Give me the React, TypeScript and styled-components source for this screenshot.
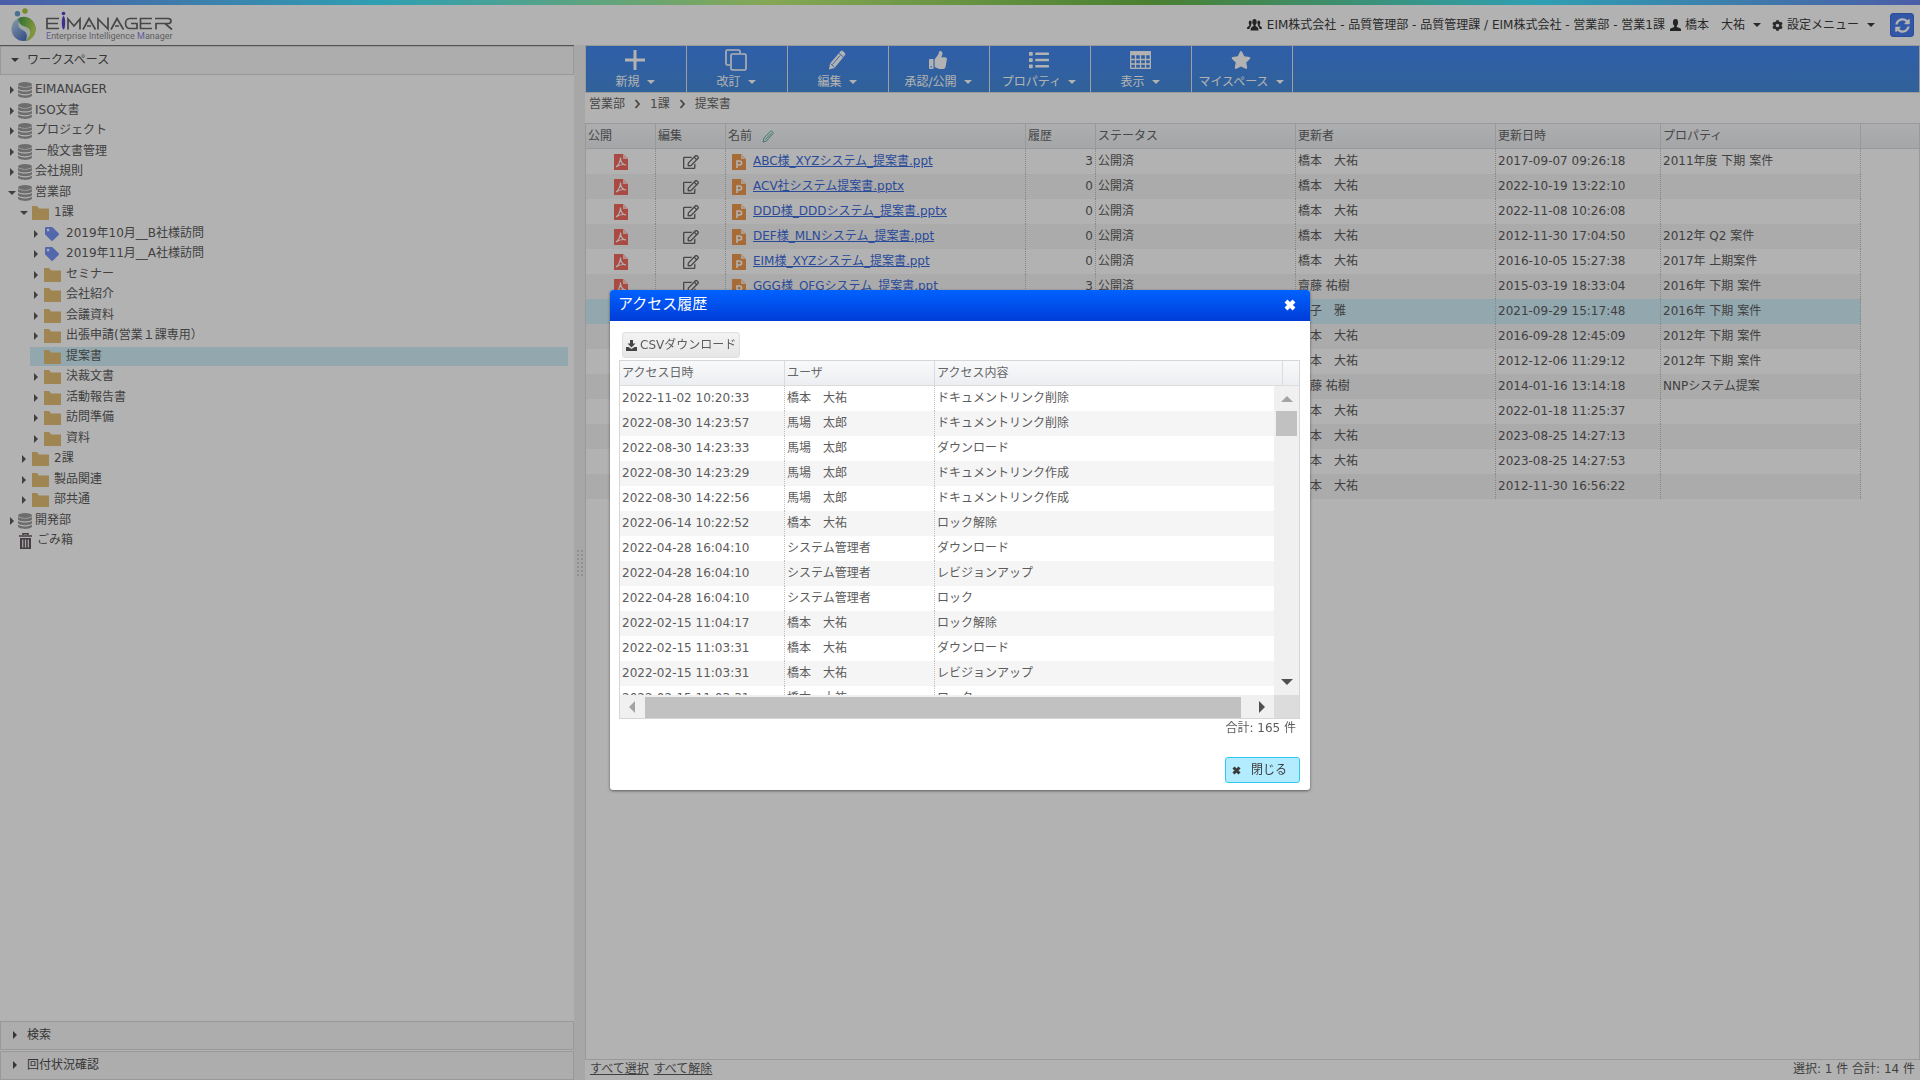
import React from "react";
import styled, { createGlobalStyle, css } from "styled-components";
import { FaCog, FaList, FaStar, FaTag, FaThumbsUp, FaSyncAlt, FaRegEdit } from "react-icons/fa";

const Global = createGlobalStyle`
  *, *::before, *::after { box-sizing: border-box; }
  body { margin: 0; background: #fff; }
  body, button, table {
    font-family: "DejaVu Sans", "Noto Sans CJK JP", sans-serif;
    font-size: 12px;
    line-height: 16px;
    color: #5c5c5c;
  }
  button { margin: 0; padding: 0; border: 0; background: none; cursor: pointer; }
  ul { list-style: none; margin: 0; padding: 0; }
  svg { display: block; flex: none; }
`;

/* ---------- shell ---------- */

const Page = styled.div`
  display: flex;
  flex-direction: column;
  height: 100vh;
  overflow: hidden;
`;

const Stripe = styled.div`
  flex: none;
  height: 5px;
  background: linear-gradient(90deg, #6c86f0 0%, #44e4ff 20%, #c0f07a 40%, #6ab745 60%, #44e4ff 80%, #6c86f0 100%);
`;

const Header = styled.header`
  flex: none;
  display: flex;
  align-items: center;
  height: 40px;
  padding: 0 6px 0 11px;
`;

const Brand = styled.div`
  display: flex;
  align-items: center;
  margin-right: auto;
`;

const UserBar = styled.div`
  display: flex;
  align-items: center;
  gap: 5px;
  color: #3c3c3c;
`;

const MenuButton = styled.button`
  display: flex;
  align-items: center;
  gap: 4px;
  margin-right: 6px;
  color: #3c3c3c;
`;

const Caret = styled.span<{ $open?: boolean; $size?: number }>`
  flex: none;
  width: 0;
  height: 0;
  border: ${(p) => p.$size ?? 4}px solid transparent;
  ${(p) =>
    p.$open
      ? css`
          border-bottom-width: 0;
          border-top-color: currentColor;
        `
      : css`
          border-right-width: 0;
          border-left-color: currentColor;
        `}
`;

const MenuCaret = styled(Caret)`
  margin-left: 4px;
`;

const RefreshButton = styled.button`
  display: grid;
  place-items: center;
  width: 24px;
  height: 24px;
  margin-left: 4px;
  border: 1px solid #3c6fe0;
  border-radius: 3px;
  background: #4a7df0;
  color: #fff;
`;

const Main = styled.div`
  flex: 1;
  display: flex;
  min-height: 0;
`;

/* ---------- left pane ---------- */

const Sidebar = styled.aside`
  flex: none;
  display: flex;
  flex-direction: column;
  gap: 1px;
  width: 574px;
  border-top: 1px solid #787878;
`;

const PaneTitle = styled.button`
  flex: none;
  display: flex;
  align-items: center;
  gap: 8px;
  height: 29px;
  padding: 0 10px 2px;
  border: 1px solid #dcdcdc;
  background: #f8f8f8;
  color: #4c4c4c;
`;

const CaretBox = styled.span`
  flex: none;
  display: flex;
  align-items: center;
  justify-content: center;
  width: 8px;
  height: 16px;
`;

const Tree = styled.ul`
  flex: 1;
  min-height: 0;
  padding: 4px 6px 0;
`;

const TreeItem = styled.li<{ $level: number }>`
  height: 20px;
  padding-left: ${(p) => p.$level * 12}px;
  &:nth-child(odd) {
    height: 21px;
  }
`;

const TreeButton = styled.button<{ $selected?: boolean; $gap: number }>`
  display: flex;
  align-items: center;
  gap: ${(p) => p.$gap}px;
  width: 100%;
  height: 19px;
  padding-bottom: 2px;
  text-align: left;
  background: ${(p) => (p.$selected ? "#d2f0fa" : "none")};
`;

const TreeIcon = styled.span<{ $gap: number }>`
  display: flex;
  align-items: center;
  gap: ${(p) => p.$gap}px;
  padding-top: 3px;
`;

const TreeCaretBox = styled(CaretBox)`
  width: 12px;
`;

const Splitter = styled.div`
  flex: none;
  display: grid;
  place-content: center;
  grid-template-columns: repeat(2, 2px);
  grid-auto-rows: 2px;
  gap: 2px;
  width: 11px;
  background: #f0f0f0;
`;

const Grip = styled.i`
  background: #d0d0d0;
`;

/* ---------- right pane ---------- */

const Content = styled.main`
  flex: 1;
  display: flex;
  flex-direction: column;
  min-width: 0;
`;

const Toolbar = styled.nav`
  flex: none;
  display: flex;
  height: 48px;
  border: 1px solid #dcdcdc;
  background: linear-gradient(#4488f2, #468cdc);
`;

const Tool = styled.button`
  display: flex;
  flex-direction: column;
  align-items: center;
  justify-content: space-between;
  width: 101px;
  padding: 2px 2px 2px 0;
  border-right: 1px solid #e4e4e4;
  color: #fff;
`;

const ToolIcon = styled.span`
  display: grid;
  place-items: center;
  height: 24px;
`;

const ToolLabel = styled.span`
  display: flex;
  align-items: center;
  gap: 7px;
`;

const Crumbs = styled.nav`
  flex: none;
  display: flex;
  align-items: center;
  gap: 9px;
  height: 30px;
  padding: 0 4px 8px;
`;

const CrumbLink = styled.a`
  color: #666;
  text-decoration: none;
`;

const GridFrame = styled.section`
  flex: 1;
  min-height: 0;
  border: 1px solid #dcdcdc;
`;

const DataTable = styled.table`
  width: 100%;
  table-layout: fixed;
  border-collapse: separate;
  border-spacing: 0;
`;

const Th = styled.th`
  height: 25px;
  padding: 0 2px;
  border-right: 1px solid #dcdcdc;
  border-bottom: 1px solid #dcdcdc;
  background: linear-gradient(#f8f9fb, #eceef1);
  font-weight: normal;
  text-align: left;
  white-space: nowrap;
  color: #666;
  &:last-child {
    border-right: 0;
  }
`;

const ThInner = styled.span`
  display: flex;
  align-items: center;
  gap: 10px;
`;

const Td = styled.td<{ $align?: "right" | "center" }>`
  height: 25px;
  padding: 0 2px 2px;
  border-right: 1px dotted #c0c0c0;
  text-align: ${(p) => p.$align ?? "left"};
  white-space: nowrap;
  overflow: hidden;
`;

const Filler = styled.td`
  background: #fff;
`;

const Row = styled.tr<{ $selected?: boolean }>`
  background: #fff;
  &:nth-child(even) {
    background: #f5f5f5;
  }
  ${(p) => p.$selected && "&& { background: #d2f0fa; }"}
`;

const IconCell = styled.span`
  display: flex;
  justify-content: center;
  padding-top: 2px;
`;

const NameCell = styled.span`
  display: flex;
  align-items: center;
  gap: 7px;
  padding-left: 4px;
`;

const FileIcon = styled.span`
  padding-top: 2px;
`;

const FileLink = styled.a`
  color: #3c6cdc;
  text-decoration: underline;
`;

const GridFoot = styled.footer`
  flex: none;
  display: flex;
  align-items: center;
  gap: 5px;
  height: 20px;
  padding: 0 5px 2px;
`;

const FootButton = styled.button`
  text-decoration: underline;
`;

const FootTotal = styled.span`
  margin-left: auto;
`;

/* ---------- dialog ---------- */

const Overlay = styled.div`
  position: fixed;
  inset: 0;
  display: grid;
  place-items: center;
  background: rgba(0, 0, 0, 0.3);
`;

const Dialog = styled.div`
  display: flex;
  flex-direction: column;
  width: 700px;
  height: 500px;
  border-radius: 3px;
  background: #fff;
  box-shadow: 0 1px 3px rgba(0, 0, 0, 0.5);
  overflow: hidden;
`;

const DialogHead = styled.header`
  flex: none;
  display: flex;
  align-items: center;
  justify-content: space-between;
  height: 31px;
  padding: 0 14px 4px 8px;
  background: linear-gradient(#0062ff, #003cd8);
  color: #fff;
`;

const DialogTitle = styled.h2`
  margin: 0;
  font-size: 15px;
  line-height: 20px;
  font-weight: normal;
`;

const IconButton = styled.button`
  padding-top: 2px;
  color: #fff;
`;

const DialogBody = styled.div`
  flex: 1;
  display: flex;
  flex-direction: column;
  padding: 11px 10px 7px 9px;
`;

const CsvButton = styled.button`
  display: flex;
  align-items: center;
  align-self: flex-start;
  gap: 3px;
  height: 26px;
  margin: 0 0 2px 3px;
  padding: 0 3px;
  border: 1px solid #e0e0e0;
  border-radius: 3px;
  background: linear-gradient(#f3f3f3, #e6e6e6);
`;

const ListFrame = styled.div`
  position: relative;
  flex: none;
  display: flex;
  flex-direction: column;
  height: 359px;
  border: 1px solid #d6d6d6;
`;

const ListClip = styled.div`
  flex: 1;
  overflow: hidden;
`;

const VScroll = styled.div`
  position: absolute;
  top: 25px;
  right: 0;
  bottom: 23px;
  display: flex;
  flex-direction: column;
  align-items: center;
  width: 25px;
  padding: 10px 0;
  background: #f0f0f0;
`;

const VThumb = styled.div`
  width: 21px;
  height: 25px;
  margin: 9px 0 auto;
  background: #c1c1c1;
`;

const HScroll = styled.div`
  flex: none;
  display: flex;
  align-items: center;
  height: 23px;
  background: #f0f0f0;
`;

const HThumb = styled.div`
  flex: 1;
  height: 21px;
  margin: 2px 18px 0 10px;
  background: #c1c1c1;
`;

const Corner = styled.div`
  width: 25px;
  height: 23px;
  margin-left: 9px;
  background: #dcdcdc;
`;

const ArrowTip = styled.span<{ $dir: "up" | "down" | "left" | "right"; $dim?: boolean }>`
  flex: none;
  width: 0;
  height: 0;
  border: 6px solid transparent;
  ${({ $dir, $dim }) => {
    const ink = $dim ? "#a3a3a3" : "#505050";
    const base = { up: "bottom", down: "top", left: "right", right: "left" }[$dir];
    const tip = { up: "top", down: "bottom", left: "left", right: "right" }[$dir];
    return `border-${base}-color: ${ink}; border-${tip}-width: 0; ${$dir === "left" ? "margin-left: 9px;" : ""}`;
  }}
`;

const Total = styled.div`
  padding: 1px 4px 0;
  text-align: right;
`;

const DialogFoot = styled.div`
  display: flex;
  justify-content: flex-end;
  margin-top: auto;
`;

const CloseButton = styled.button`
  display: flex;
  align-items: center;
  gap: 10px;
  height: 26px;
  padding: 0 12px 0 6px;
  border: 1px solid #2fc8f6;
  border-radius: 3px;
  background: #b4ecff;
  color: #3c3c3c;
`;

/* ---------- drawings ---------- */

const Logo = () => (
  <svg width="162" height="34" viewBox="0 0 162 34" role="img" aria-label="EIMANAGER">
    <defs>
      <linearGradient id="lgBlue" x1="0" y1="0.2" x2="0.8" y2="1">
        <stop offset="0" stopColor="#b8d8f0" />
        <stop offset="1" stopColor="#3a5cb8" />
      </linearGradient>
      <linearGradient id="lgGreen" x1="0" y1="0" x2="1" y2="0.4">
        <stop offset="0" stopColor="#3f9a55" />
        <stop offset="1" stopColor="#bfdc4a" />
      </linearGradient>
    </defs>
    <circle cx="14" cy="3" r="2.700" fill="#a9c83c" />
    <circle cx="6.500" cy="5.800" r="2.700" fill="#6d9fc9" />
    <ellipse cx="12.500" cy="21" rx="12" ry="12" fill="url(#lgBlue)" />
    <path d="M8 10C16 6 24.500 12.500 24.500 21c0 6.500-5 12-10.500 12 5-3 6-8 1.500-11C11 19 7 18 7 14c0-2 .500-3 1-4z" fill="url(#lgGreen)" />
    <path d="M8.500 11c-1.500 5 2 6.500 6.500 8 6 2 5.500 9 0 13.500 2-6 .500-8.500-3.500-10.500-4-2-5.500-6-3-11z" fill="#e4efe8" />
    <g fill="none" stroke="#666" strokeWidth="1.700">
      <path d="M48 10.500H36v10H48M36 15.500H47" />
      <path d="M57 21.500V11l6 7 6-7v10.500" />
      <path d="M72 21.500 78 10.500l6.500 11M80 18h-4" />
      <path d="M87 21.500V11l10 10V9.500" />
      <path d="M100 21.500 106 10.500l6.500 11M108 18h-4" />
      <path d="M126 10.500h-7c-6 0-6 10 0 10h7v-5h-6" />
      <path d="M141 10.500h-11.500v10H141M129.500 15.500H140" />
      <path d="M145 21.500v-6h12c4 0 4-5 0-5h-13M154 15.500l7 6" />
    </g>
    <circle cx="52.500" cy="5.500" r="1.800" fill="#5b3fd0" />
    <ellipse cx="52.500" cy="14.800" rx="1.700" ry="6.800" fill="#5b3fd0" />
    <text x="35" y="30.500" fontFamily="Roboto, sans-serif" fontSize="9" fill="#8a8a8a">
      <tspan fill="#8f7fe0">E</tspan>nterprise <tspan fill="#8f7fe0">I</tspan>ntelligence <tspan fill="#8f7fe0">M</tspan>anager
    </text>
  </svg>
);

const GroupIcon = () => (
  <svg width="15" height="12" viewBox="0 0 15 12" fill="#333">
    <ellipse cx="7.500" cy="3" rx="2.200" ry="3" />
    <path d="M3.500 11.500c0-3 1-3.500 3-4.500V5h2v2c2 1 3 1.500 3 4.500z" />
    <ellipse cx="3.200" cy="3.700" rx="1.500" ry="2.300" />
    <path d="M0 10c0-2.300 1-2.700 2.400-3.200V5h1.500l.3 2c-1 .6-1.500 1.300-1.700 3z" />
    <ellipse cx="11.800" cy="3.700" rx="1.500" ry="2.300" />
    <path d="M15 10c0-2.300-1-2.700-2.400-3.200V5h-1.500l-.3 2c1 .6 1.500 1.300 1.700 3z" />
  </svg>
);

const PersonIcon = () => (
  <svg width="11" height="12" viewBox="0 0 12 13" fill="#333">
    <ellipse cx="6" cy="3.800" rx="2.800" ry="3.800" />
    <path d="M0 13v-1.500C0 10 3 9.500 4.600 8.800V6h2.800v2.800C9 9.500 12 10 12 11.500V13z" />
  </svg>
);

const DbIcon = () => (
  <svg width="14" height="16" viewBox="0 0 14 16" fill="#9c9c9c">
    <ellipse cx="7" cy="2.500" rx="7" ry="2.500" />
    <path d="M0 3.800c1 2.400 13 2.400 14 0v2.600c-1 2.600-13 2.600-14 0z" />
    <path d="M0 7.800c1 2.400 13 2.400 14 0v2.400c-1 2.600-13 2.600-14 0z" />
    <path d="M0 11.600c1 2.400 13 2.400 14 0v2c-1 3.200-13 3.200-14 0z" />
  </svg>
);

const FolderIcon = () => (
  <svg width="17" height="14" viewBox="0 0 17 14" fill="#e2bf74">
    <path d="M0 0h5l2 2.500h10V14H0z" />
  </svg>
);

const TrashIcon = () => (
  <svg width="13" height="16" viewBox="0 0 13 16">
    <path d="M4 2V.7h5V2M0 3h13" fill="none" stroke="#62595f" strokeWidth="1.500" />
    <path d="M1 5h11v11H1z" fill="#62595f" />
    <path d="M3.700 6.500v8M6.500 6.500v8M9.300 6.500v8" stroke="#f4f4f4" strokeWidth="1.200" />
  </svg>
);

const PlusIcon = () => (
  <svg width="22" height="22" viewBox="0 0 22 22" stroke="#fff" strokeWidth="3">
    <path d="M11 1v20M1 11h20" />
  </svg>
);

const CopyIcon = () => (
  <svg width="22" height="22" viewBox="0 0 22 22" fill="none" stroke="#fff" strokeWidth="1.600">
    <rect x="6" y="5" width="15" height="16" rx="1.500" />
    <path d="M5 16H2.500C1.500 16 1 15.500 1 14.500V2.500C1 1.500 1.500 1 2.500 1h11c1 0 1.500.5 1.500 1.500V4" />
  </svg>
);

const PencilIcon = () => (
  <svg width="20" height="20" viewBox="0 0 20 20" fill="#fff">
    <path d="M14 .8c1.500-.8 5 2.500 4.300 4L7.500 18 2 19.500 3 13.500z" />
    <path d="M5.500 14.500 13 5.500M11.800 3l4.500 4M3.500 13.500l4 3.800" stroke="#4488f0" strokeWidth="0.900" fill="none" />
  </svg>
);

const TableIcon = () => (
  <svg width="21" height="18" viewBox="0 0 21 18" fill="none" stroke="#fff" strokeWidth="1.300">
    <rect x="0.700" y="0.700" width="19.600" height="16.600" />
    <path d="M1 2.500h19" strokeWidth="3.500" />
    <path d="M1 8.500h19M1 13h19M5.500 4v13M10.500 4v13M15.500 4v13" />
  </svg>
);

const Chevron = () => (
  <svg width="7" height="10" viewBox="0 0 7 10" fill="none" stroke="#666" strokeWidth="1.800">
    <path d="M1.500 1 5 5 1.500 9" />
  </svg>
);

const PenIcon = () => (
  <svg width="12" height="13" viewBox="0 0 12 13" fill="none" stroke="#5fae9c" strokeWidth="1">
    <path d="M1 12 2 8 8.500 1.200c1-.8 3.200 1 2.500 2.300L4.500 11zM3.500 9.500 9.500 3" />
  </svg>
);

const PdfIcon = () => (
  <svg width="14" height="16" viewBox="0 0 14 16">
    <path d="M0 0h9l5 5v11H0z" fill="#f26a60" />
    <path d="M9 0v5h5z" fill="#ffd0cc" />
    <path d="M2 13c2-1 4.500-5 4.500-9.500 0 4 2 7 5.500 7.500-3-1-7 0-10 2z" fill="none" stroke="#fff" strokeWidth="1.100" />
  </svg>
);

const PptIcon = () => (
  <svg width="14" height="16" viewBox="0 0 14 16">
    <path d="M0 0h9l5 5v11H0z" fill="#ee9a4e" />
    <path d="M9 0v5h5z" fill="#fbe0c6" />
    <path d="M5 14V7h2.500c2.800 0 2.800 4 0 4H5" fill="none" stroke="#fff" strokeWidth="1.600" />
  </svg>
);

const CrossIcon = ({ size }: { size: number }) => (
  <svg width={size} height={size} viewBox="0 0 12 12" stroke="currentColor" strokeWidth="4">
    <path d="M2 2l8 8M10 2l-8 8" />
  </svg>
);

const DownloadIcon = () => (
  <svg width="11" height="11" viewBox="0 0 11 11" fill="#444">
    <path d="M4 0h3v3.500h2.500L5.500 7.500l-4-4H4z" />
    <path d="M0 7h2.500l3 2 3-2H11v4H0z" />
  </svg>
);

/* ---------- data ---------- */

type Kind = "db" | "folder" | "tag" | "trash";
type Node = { label: string; level: number; kind: Kind; state?: "open" | "closed"; selected?: boolean };

const n = (label: string, level: number, kind: Kind, state?: "open" | "closed", selected?: boolean): Node => ({
  label, level, kind, state, selected,
});

const nodes: Node[] = [
  n("EIMANAGER", 0, "db", "closed"),
  n("ISO文書", 0, "db", "closed"),
  n("プロジェクト", 0, "db", "closed"),
  n("一般文書管理", 0, "db", "closed"),
  n("会社規則", 0, "db", "closed"),
  n("営業部", 0, "db", "open"),
  n("1課", 1, "folder", "open"),
  n("2019年10月__B社様訪問", 2, "tag", "closed"),
  n("2019年11月__A社様訪問", 2, "tag", "closed"),
  n("セミナー", 2, "folder", "closed"),
  n("会社紹介", 2, "folder", "closed"),
  n("会議資料", 2, "folder", "closed"),
  n("出張申請(営業１課専用）", 2, "folder", "closed"),
  n("提案書", 2, "folder", undefined, true),
  n("決裁文書", 2, "folder", "closed"),
  n("活動報告書", 2, "folder", "closed"),
  n("訪問準備", 2, "folder", "closed"),
  n("資料", 2, "folder", "closed"),
  n("2課", 1, "folder", "closed"),
  n("製品関連", 1, "folder", "closed"),
  n("部共通", 1, "folder", "closed"),
  n("開発部", 0, "db", "closed"),
  n("ごみ箱", 0, "trash"),
];

const nodeIcon: Record<Kind, React.ReactNode> = {
  db: <DbIcon />,
  folder: <FolderIcon />,
  tag: <FaTag size={14} color="#7894f8" />,
  trash: <TrashIcon />,
};

/* space between caret and icon, then between icon and label */
const nodeGaps: Record<Kind, [number, number]> = { db: [0, 3], folder: [2, 5], tag: [3, 7], trash: [1, 5] };

const tools: [string, React.ReactNode][] = [
  ["新規", <PlusIcon />],
  ["改訂", <CopyIcon />],
  ["編集", <PencilIcon />],
  ["承認/公開", <FaThumbsUp size={18} />],
  ["プロパティ", <FaList size={20} />],
  ["表示", <TableIcon />],
  ["マイスペース", <FaStar size={20} />],
];

type Doc = { name?: string; rev?: number; by: string; at: string; prop?: string; selected?: boolean };

const HASHIMOTO = "橋本　大祐";

const docs: Doc[] = [
  { name: "ABC様_XYZシステム_提案書.ppt", rev: 3, by: HASHIMOTO, at: "2017-09-07 09:26:18", prop: "2011年度 下期 案件" },
  { name: "ACV社システム提案書.pptx", rev: 0, by: HASHIMOTO, at: "2022-10-19 13:22:10" },
  { name: "DDD様_DDDシステム_提案書.pptx", rev: 0, by: HASHIMOTO, at: "2022-11-08 10:26:08" },
  { name: "DEF様_MLNシステム_提案書.ppt", rev: 0, by: HASHIMOTO, at: "2012-11-30 17:04:50", prop: "2012年 Q2 案件" },
  { name: "EIM様_XYZシステム_提案書.ppt", rev: 0, by: HASHIMOTO, at: "2016-10-05 15:27:38", prop: "2017年 上期案件" },
  { name: "GGG様_OFGシステム_提案書.ppt", rev: 3, by: "齋藤 祐樹", at: "2015-03-19 18:33:04", prop: "2016年 下期 案件" },
  { by: "金子　雅", at: "2021-09-29 15:17:48", prop: "2016年 下期 案件", selected: true },
  { by: HASHIMOTO, at: "2016-09-28 12:45:09", prop: "2012年 下期 案件" },
  { by: HASHIMOTO, at: "2012-12-06 11:29:12", prop: "2012年 下期 案件" },
  { by: "齋藤 祐樹", at: "2014-01-16 13:14:18", prop: "NNPシステム提案" },
  { by: HASHIMOTO, at: "2022-01-18 11:25:37" },
  { by: HASHIMOTO, at: "2023-08-25 14:27:13" },
  { by: HASHIMOTO, at: "2023-08-25 14:27:53" },
  { by: HASHIMOTO, at: "2012-11-30 16:56:22" },
];

const BABA = "馬場　太郎";
const ADMIN = "システム管理者";

const history: [string, string, string][] = [
  ["2022-11-02 10:20:33", HASHIMOTO, "ドキュメントリンク削除"],
  ["2022-08-30 14:23:57", BABA, "ドキュメントリンク削除"],
  ["2022-08-30 14:23:33", BABA, "ダウンロード"],
  ["2022-08-30 14:23:29", BABA, "ドキュメントリンク作成"],
  ["2022-08-30 14:22:56", BABA, "ドキュメントリンク作成"],
  ["2022-06-14 10:22:52", HASHIMOTO, "ロック解除"],
  ["2022-04-28 16:04:10", ADMIN, "ダウンロード"],
  ["2022-04-28 16:04:10", ADMIN, "レビジョンアップ"],
  ["2022-04-28 16:04:10", ADMIN, "ロック"],
  ["2022-02-15 11:04:17", HASHIMOTO, "ロック解除"],
  ["2022-02-15 11:03:31", HASHIMOTO, "ダウンロード"],
  ["2022-02-15 11:03:31", HASHIMOTO, "レビジョンアップ"],
  ["2022-02-15 11:03:31", HASHIMOTO, "ロック"],
];

const Columns = ({ widths }: { widths: number[] }) => (
  <colgroup>
    {widths.map((w, i) => (
      <col key={i} width={w} />
    ))}
    <col />
  </colgroup>
);

/* ---------- sections ---------- */

const AccordionTitle = ({ label, open }: { label: string; open?: boolean }) => (
  <PaneTitle aria-expanded={!!open}>
    <CaretBox>
      <Caret $open={open} />
    </CaretBox>
    {label}
  </PaneTitle>
);

const WorkspacePane = () => (
  <Sidebar>
    <AccordionTitle label="ワークスペース" open />
    <Tree>
      {nodes.map((node) => (
        <TreeItem key={node.label} $level={node.level}>
          <TreeButton $selected={node.selected} $gap={nodeGaps[node.kind][1]}>
            <TreeIcon $gap={nodeGaps[node.kind][0]}>
              <TreeCaretBox>{node.state && <Caret $open={node.state === "open"} />}</TreeCaretBox>
              {nodeIcon[node.kind]}
            </TreeIcon>
            {node.label}
          </TreeButton>
        </TreeItem>
      ))}
    </Tree>
    <AccordionTitle label="検索" />
    <AccordionTitle label="回付状況確認" />
  </Sidebar>
);

const DocumentGrid = () => (
  <GridFrame>
    <DataTable>
      <Columns widths={[70, 70, 300, 70, 200, 200, 165, 200]} />
      <thead>
        <tr>
          <Th>公開</Th>
          <Th>編集</Th>
          <Th>
            <ThInner>
              名前
              <PenIcon />
            </ThInner>
          </Th>
          <Th>履歴</Th>
          <Th>ステータス</Th>
          <Th>更新者</Th>
          <Th>更新日時</Th>
          <Th>プロパティ</Th>
          <Th />
        </tr>
      </thead>
      <tbody>
        {docs.map((d) => (
          <Row key={d.at} $selected={d.selected}>
            <Td>{d.name && <IconCell><PdfIcon /></IconCell>}</Td>
            <Td>{d.name && <IconCell><FaRegEdit size={16} color="#666" /></IconCell>}</Td>
            <Td>
              {d.name && (
                <NameCell>
                  <FileIcon>
                    <PptIcon />
                  </FileIcon>
                  <FileLink href="#">{d.name}</FileLink>
                </NameCell>
              )}
            </Td>
            <Td $align="right">{d.rev}</Td>
            <Td>{d.name && "公開済"}</Td>
            <Td>{d.by}</Td>
            <Td>{d.at}</Td>
            <Td>{d.prop}</Td>
            <Filler />
          </Row>
        ))}
      </tbody>
    </DataTable>
  </GridFrame>
);

const HistoryDialog = () => (
  <Overlay>
    <Dialog role="dialog" aria-modal="true" aria-labelledby="history-title">
      <DialogHead>
        <DialogTitle id="history-title">アクセス履歴</DialogTitle>
        <IconButton aria-label="閉じる">
          <CrossIcon size={12} />
        </IconButton>
      </DialogHead>
      <DialogBody>
        <CsvButton>
          <DownloadIcon />
          CSVダウンロード
        </CsvButton>
        <ListFrame>
          <ListClip>
            <DataTable>
              <Columns widths={[165, 150, 348]} />
              <thead>
                <tr>
                  <Th>アクセス日時</Th>
                  <Th>ユーザ</Th>
                  <Th>アクセス内容</Th>
                  <Th />
                </tr>
              </thead>
              <tbody>
                {history.map(([at, user, action], i) => (
                  <Row key={i}>
                    <Td>{at}</Td>
                    <Td>{user}</Td>
                    <Td>{action}</Td>
                    <td />
                  </Row>
                ))}
              </tbody>
            </DataTable>
          </ListClip>
          <VScroll>
            <ArrowTip $dir="up" $dim />
            <VThumb />
            <ArrowTip $dir="down" />
          </VScroll>
          <HScroll>
            <ArrowTip $dir="left" $dim />
            <HThumb />
            <ArrowTip $dir="right" />
            <Corner />
          </HScroll>
        </ListFrame>
        <Total>合計: 165 件</Total>
        <DialogFoot>
          <CloseButton>
            <CrossIcon size={9} />
            閉じる
          </CloseButton>
        </DialogFoot>
      </DialogBody>
    </Dialog>
  </Overlay>
);

export default function App() {
  return (
    <>
      <Global />
      <Page lang="ja">
        <Stripe />
        <Header>
          <Brand>
            <Logo />
          </Brand>
          <UserBar>
            <GroupIcon />
            <span>EIM株式会社 - 品質管理部 - 品質管理課 / EIM株式会社 - 営業部 - 営業1課</span>
            <MenuButton>
              <PersonIcon />
              {HASHIMOTO}
              <MenuCaret $open />
            </MenuButton>
            <MenuButton>
              <FaCog size={11} />
              設定メニュー
              <MenuCaret $open />
            </MenuButton>
            <RefreshButton aria-label="更新">
              <FaSyncAlt size={15} />
            </RefreshButton>
          </UserBar>
        </Header>
        <Main>
          <WorkspacePane />
          <Splitter>
            {Array.from({ length: 14 }, (_, i) => (
              <Grip key={i} />
            ))}
          </Splitter>
          <Content>
            <Toolbar>
              {tools.map(([label, icon]) => (
                <Tool key={label}>
                  <ToolIcon>{icon}</ToolIcon>
                  <ToolLabel>
                    {label}
                    <Caret $open $size={4} />
                  </ToolLabel>
                </Tool>
              ))}
            </Toolbar>
            <Crumbs>
              <CrumbLink href="#">営業部</CrumbLink>
              <Chevron />
              <CrumbLink href="#">1課</CrumbLink>
              <Chevron />
              <CrumbLink href="#">提案書</CrumbLink>
            </Crumbs>
            <DocumentGrid />
            <GridFoot>
              <FootButton>すべて選択</FootButton>
              <FootButton>すべて解除</FootButton>
              <FootTotal>選択: 1 件 合計: 14 件</FootTotal>
            </GridFoot>
          </Content>
        </Main>
      </Page>
      <HistoryDialog />
    </>
  );
}
